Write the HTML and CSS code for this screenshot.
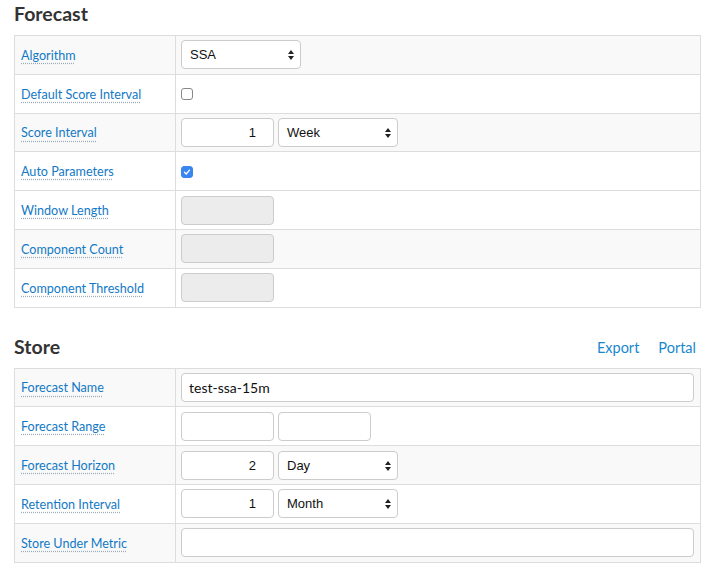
FILE: index.html
```html
<!DOCTYPE html>
<html>
<head>
<meta charset="utf-8">
<link rel="stylesheet" href="styles.css">
</head>
<body>
<div class="page">
  <section class="section">
    <div class="section-head">
      <h2 class="title">Forecast</h2>
    </div>
    <table class="form-table">
      <tr class="odd"><td class="label"><a>Algorithm</a></td><td class="value"><div class="select w-sel">SSA<span class="arrows"></span></div></td></tr>
      <tr><td class="label"><a>Default Score Interval</a></td><td class="value"><span class="check"></span></td></tr>
      <tr class="odd"><td class="label"><a>Score Interval</a></td><td class="value"><div class="group"><div class="input num">1</div><div class="select w-sel">Week<span class="arrows"></span></div></div></td></tr>
      <tr><td class="label"><a>Auto Parameters</a></td><td class="value"><span class="check checked"><svg viewBox="0 0 12 12" width="12" height="12"><path d="M3 6.3 L5.1 8.4 L9 3.8" fill="none" stroke="#fff" stroke-width="1.6" stroke-linecap="round" stroke-linejoin="round"/></svg></span></td></tr>
      <tr><td class="label"><a>Window Length</a></td><td class="value"><div class="input num disabled"></div></td></tr>
      <tr class="odd"><td class="label"><a>Component Count</a></td><td class="value"><div class="input num disabled"></div></td></tr>
      <tr><td class="label"><a>Component Threshold</a></td><td class="value"><div class="input num disabled"></div></td></tr>
    </table>
  </section>
  <section class="section store">
    <div class="section-head">
      <h2 class="title">Store</h2>
      <nav class="links"><a>Export</a><a>Portal</a></nav>
    </div>
    <table class="form-table">
      <tr class="odd"><td class="label"><a>Forecast Name</a></td><td class="value"><div class="input text">test-ssa-15m</div></td></tr>
      <tr><td class="label"><a>Forecast Range</a></td><td class="value"><div class="group"><div class="input num"></div><div class="input num"></div></div></td></tr>
      <tr class="odd"><td class="label"><a>Forecast Horizon</a></td><td class="value"><div class="group"><div class="input num">2</div><div class="select w-sel">Day<span class="arrows"></span></div></div></td></tr>
      <tr><td class="label"><a>Retention Interval</a></td><td class="value"><div class="group"><div class="input num">1</div><div class="select w-sel">Month<span class="arrows"></span></div></div></td></tr>
      <tr class="odd"><td class="label"><a>Store Under Metric</a></td><td class="value"><div class="input text"></div></td></tr>
    </table>
  </section>
</div>
</body>
</html>
```

FILE: styles.css
```css
* { box-sizing: border-box; }
html, body { margin: 0; padding: 0; background: #fff; }
body { font-family: Lato, "Open Sans", sans-serif; color: #333; }
.page { padding: 0 15px 0 14px; }
.section-head { display: flex; align-items: flex-end; justify-content: space-between; height: 35px; padding-bottom: 10px; }
.title { margin: 0; font-size: 19.5px; font-weight: 700; color: #333; line-height: 22px; }
.store { margin-top: 25px; }
.store .section-head { height: 35px; padding-bottom: 10px; }
.links { display: flex; gap: 19px; padding-right: 5px; }
.links a { color: #1a88cf; font-size: 14.5px; line-height: 20px; }
.form-table { width: 100%; border-collapse: collapse; border: 1px solid #ddd; }
.form-table tr { height: 38.8px; }
.form-table tr.odd { background: #f9f9f9; }
.form-table td { border: 1px solid #ddd; padding: 0 6px 3px 6px; vertical-align: middle; }
.label { width: 161px; }
.label a { color: #1379c6; font-size: 12.6px; text-decoration: underline dotted #9ab; text-underline-offset: 3px; }
.form-table td.value { padding: 4px 6px 4px 5px; }
.group { display: flex; gap: 4px; }
.input, .select { height: 29px; border: 1px solid #ccc; border-radius: 4px; background: #fff; font-family: "Liberation Sans", Arial, sans-serif; font-size: 13px; color: #111; display: flex; align-items: center; }
.num { width: 93px; justify-content: flex-end; padding-right: 17px; }
.text { width: 100%; padding-left: 7px; font-family: Lato, sans-serif; font-size: 14px; }
.disabled { background: #ececec; }
.select { width: 120px; padding: 0 0 0 8px; position: relative; }
.w-sel { width: 120px; }
.arrows { position: absolute; right: 6px; top: 9px; width: 6px; height: 10px; }
.arrows::before, .arrows::after { content: ""; position: absolute; left: 0; border-left: 3px solid transparent; border-right: 3px solid transparent; }
.arrows::before { top: 0; border-bottom: 4px solid #222; }
.arrows::after { bottom: 0; border-top: 4px solid #222; }
.check { display: block; width: 12px; height: 12px; border: 1px solid #888; border-radius: 3px; background: #fff; margin-top: 1px; }
.check.checked { background: #3a86f0; border-color: #3a86f0; display: flex; align-items: center; justify-content: center; }
.check.checked svg { display: block; }
```
